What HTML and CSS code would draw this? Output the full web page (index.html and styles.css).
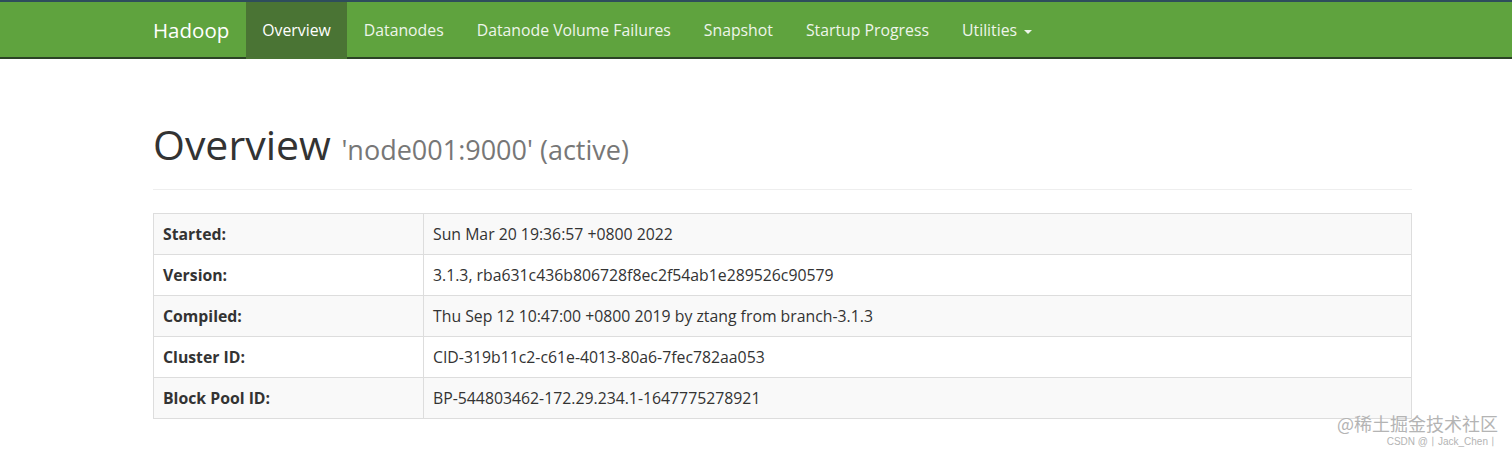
FILE: index.html
```html
<!DOCTYPE html>
<html lang="en">
<head>
    <meta charset="UTF-8">
    <title>Namenode information</title>
    <link rel="stylesheet" href="styles.css">
</head>
<body>
    <header class="navbar">
        <div class="container nav-inner">
            <a class="brand" href="#">Hadoop</a>
            <ul class="nav">
                <li class="active"><a href="#tab-overview">Overview</a></li>
                <li><a href="#tab-datanode">Datanodes</a></li>
                <li><a href="#tab-datanode-volume-failures">Datanode Volume Failures</a></li>
                <li><a href="#tab-snapshot">Snapshot</a></li>
                <li><a href="#tab-startup-progress">Startup Progress</a></li>
                <li><a href="#">Utilities <span class="caret"></span></a></li>
            </ul>
        </div>
    </header>

    <div class="container">
        <div class="page-header">
            <h1>Overview <small>'node001:9000' (active)</small></h1>
        </div>

        <table class="info">
            <tr><th>Started:</th><td>Sun Mar 20 19:36:57 +0800 2022</td></tr>
            <tr><th>Version:</th><td>3.1.3, rba631c436b806728f8ec2f54ab1e289526c90579</td></tr>
            <tr><th>Compiled:</th><td>Thu Sep 12 10:47:00 +0800 2019 by ztang from branch-3.1.3</td></tr>
            <tr><th>Cluster ID:</th><td>CID-319b11c2-c61e-4013-80a6-7fec782aa053</td></tr>
            <tr><th>Block Pool ID:</th><td>BP-544803462-172.29.234.1-1647775278921</td></tr>
        </table>
    </div>

    <div class="watermark">
        <div class="wm-big">@稀土掘金技术社区</div>
        <div class="wm-small">CSDN @丨Jack_Chen丨</div>
    </div>
</body>
</html>
```

FILE: styles.css
```css
body {
    margin: 0;
    font-family: "Open Sans", "Noto Sans", sans-serif;
    font-size: 15.8px;
    line-height: 22px;
    color: #333;
    background: #fff;
}
a {
    text-decoration: none;
}
.container {
    width: 1259px;
    margin-left: 153px;
}
.navbar {
    background: #5fa33e;
    border-top: 2px solid #2e4d5c;
    border-bottom: 2px solid #2b4325;
    height: 55px;
}
.nav-inner {
    display: flex;
    height: 55px;
}
.brand {
    color: #fff;
    font-size: 20.5px;
    line-height: 56px;
    padding-right: 16.5px;
}
.nav {
    display: flex;
    list-style: none;
    margin: 0;
    padding: 0;
}
.nav a {
    display: block;
    padding: 0 16.5px;
    line-height: 57px;
    font-size: 15.8px;
    color: #eef5ea;
}
.nav .active a {
    background: #4a7434;
    color: #fff;
}
.caret {
    display: inline-block;
    width: 0;
    height: 0;
    margin-left: 3px;
    vertical-align: middle;
    border-top: 4.4px solid;
    border-left: 4.4px solid transparent;
    border-right: 4.4px solid transparent;
}
.page-header {
    margin: 63px 0 23px;
    padding-bottom: 6px;
    border-bottom: 1px solid #eee;
}
h1 {
    margin: 24px 0 11px;
    font-size: 41px;
    font-weight: 400;
    line-height: 44px;
}
h1 small {
    font-size: 27px;
    color: #777;
}
.info {
    width: 100%;
    border-collapse: collapse;
    border: 1px solid #ddd;
}
.info th, .info td {
    padding: 9px;
    border: 1px solid #ddd;
    text-align: left;
    vertical-align: top;
}
.info th {
    width: 251px;
    font-weight: 700;
}
.info tr:nth-child(odd) {
    background: #f9f9f9;
}
.watermark {
    position: absolute;
    right: 14px;
    top: 410px;
    text-align: right;
    color: #b4b4b4;
    font-family: "Noto Sans CJK SC", sans-serif;
}
.wm-big {
    font-size: 18px;
    line-height: 26px;
}
.wm-small {
    font-family: "Liberation Sans", sans-serif;
    font-size: 10px;
    line-height: 12px;
}
```
